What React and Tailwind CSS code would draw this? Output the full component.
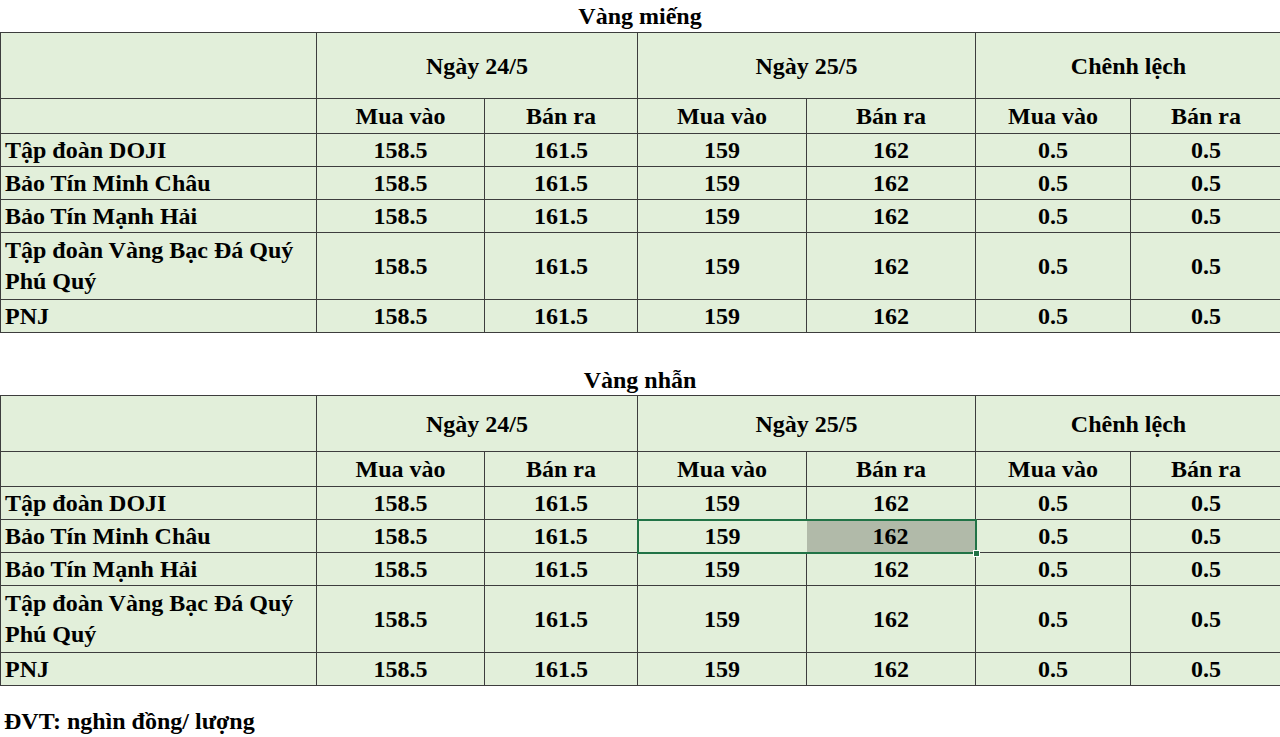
import React from 'react';

const rows = [
    { name: 'Tập đoàn DOJI', tall: false },
    { name: 'Bảo Tín Minh Châu', tall: false },
    { name: 'Bảo Tín Mạnh Hải', tall: false },
    { name: 'Tập đoàn Vàng Bạc Đá Quý Phú Quý', tall: true },
    { name: 'PNJ', tall: false },
];

const cell = 'border border-[#3d3d3d] text-center align-middle p-0';

const PriceTable = ({ title, headHeight, selected }) => {
    return (
        <div>
            <div className={`${title === 'Vàng miếng' ? 'h-[32px] pt-[2px]' : 'h-[62px] pt-[33px]'} text-center leading-[28px]`}>
                {title}
            </div>
            <table className="table-fixed border-collapse w-[1281px] bg-[#e2efda]">
                <colgroup>
                    <col className="w-[316px]" />
                    <col className="w-[168px]" />
                    <col className="w-[153px]" />
                    <col className="w-[169px]" />
                    <col className="w-[169px]" />
                    <col className="w-[155px]" />
                    <col className="w-[151px]" />
                </colgroup>
                <tbody>
                    <tr className={headHeight}>
                        <td className={cell}></td>
                        <td className={cell} colSpan={2}>Ngày 24/5</td>
                        <td className={cell} colSpan={2}>Ngày 25/5</td>
                        <td className={cell} colSpan={2}>Chênh lệch</td>
                    </tr>
                    <tr className="h-[35px]">
                        <td className={cell}></td>
                        <td className={cell}>Mua vào</td>
                        <td className={cell}>Bán ra</td>
                        <td className={cell}>Mua vào</td>
                        <td className={cell}>Bán ra</td>
                        <td className={cell}>Mua vào</td>
                        <td className={cell}>Bán ra</td>
                    </tr>
                    {rows.map((r, i) => {
                        const sel = selected && i === 1;
                        return (
                            <tr key={r.name} className={r.tall ? 'h-[67px]' : 'h-[33px]'}>
                                <td className="border border-[#3d3d3d] text-left align-middle pl-[4px] pr-2 leading-[31px]">
                                    {r.name}
                                </td>
                                <td className={cell}>158.5</td>
                                <td className={cell}>161.5</td>
                                <td className={sel ? 'border-2 border-r-0 border-[#217346] text-center align-middle p-0' : cell}>159</td>
                                <td className={sel ? 'relative border-2 border-l-0 border-[#217346] bg-[#b1baa9] text-center align-middle p-0' : cell}>
                                    162
                                    {sel && (
                                        <span className="absolute -right-[5px] -bottom-[5px] w-[7px] h-[7px] bg-[#217346] border border-white"></span>
                                    )}
                                </td>
                                <td className={cell}>0.5</td>
                                <td className={cell}>0.5</td>
                            </tr>
                        );
                    })}
                </tbody>
            </table>
        </div>
    );
};

const App = () => {
    return (
        <div className="[font-family:Liberation_Serif,Times_New_Roman,serif] w-[1280px] h-[737px] overflow-hidden bg-white text-black font-bold text-[24px] leading-[28px]">
            <PriceTable title="Vàng miếng" headHeight="h-[66px]" />
            <PriceTable title="Vàng nhẫn" headHeight="h-[56px]" selected />
            <div className="pl-[4px] pt-[21px] leading-[28px]">ĐVT: nghìn đồng/ lượng</div>
        </div>
    );
};

export default App;
